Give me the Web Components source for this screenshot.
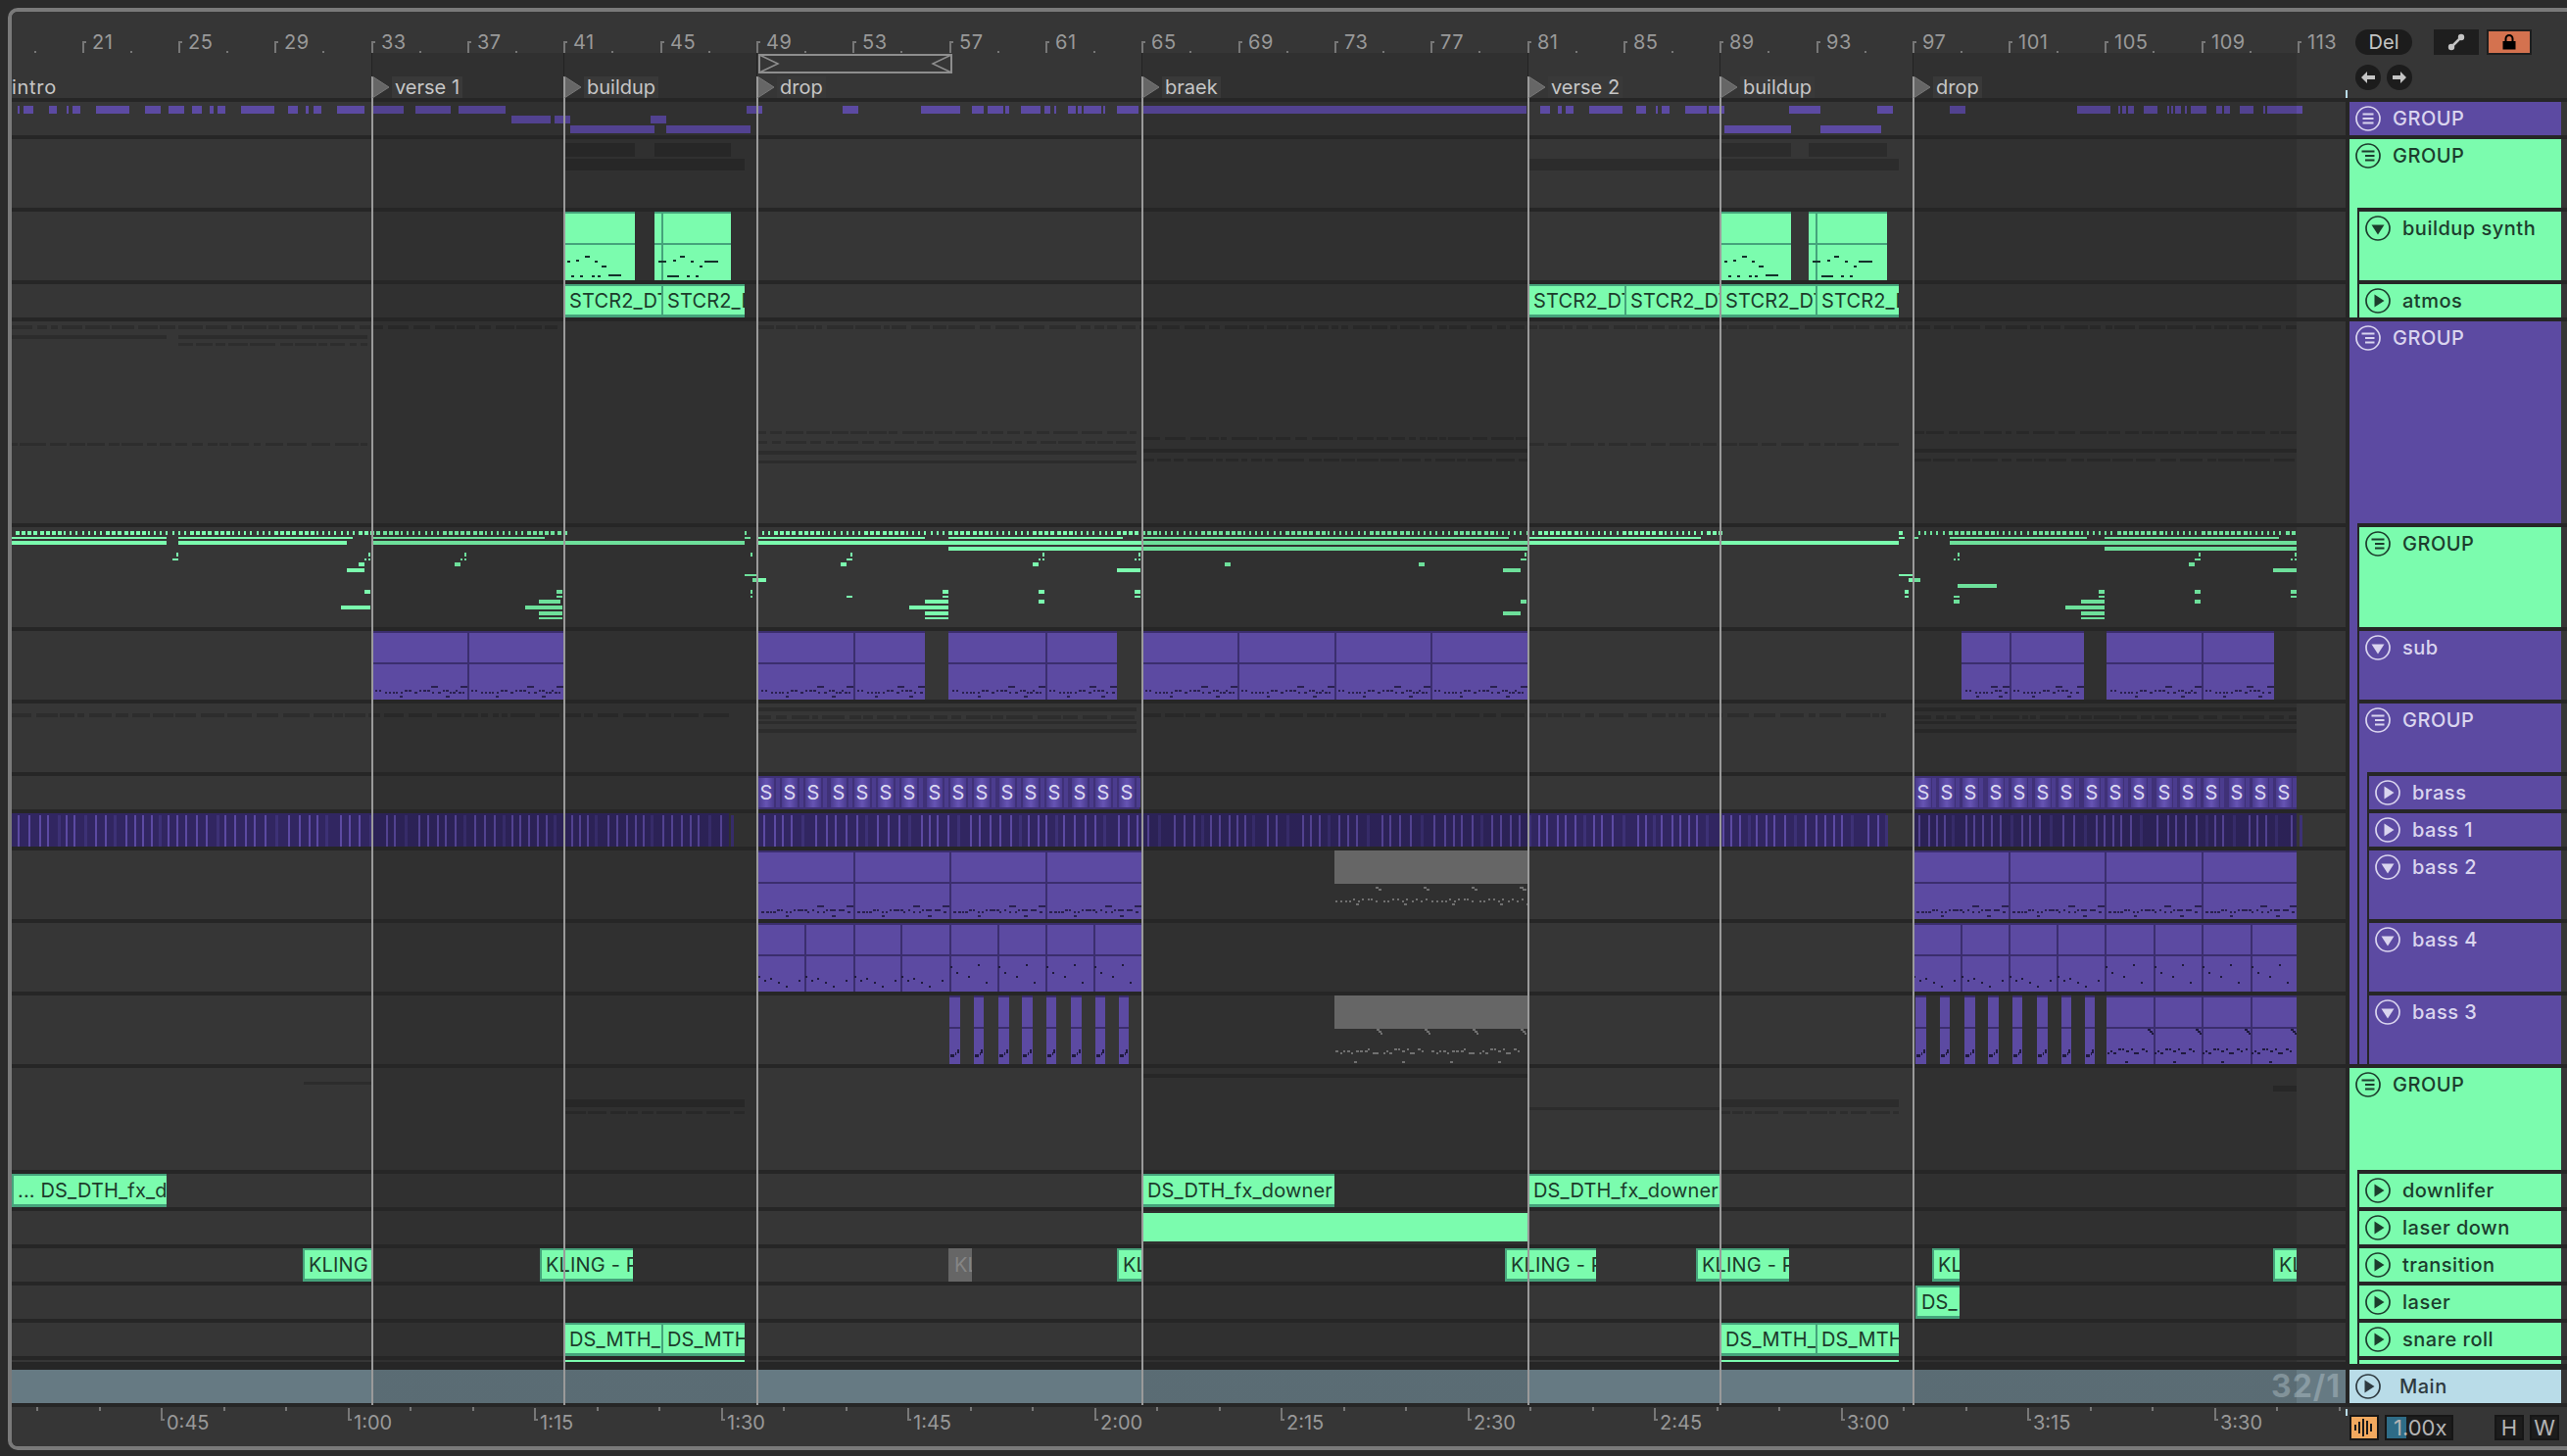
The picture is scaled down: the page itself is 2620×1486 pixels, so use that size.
<!DOCTYPE html>
<html>
<head>
<meta charset="utf-8">
<title>Arrangement</title>
<style>
html, body { margin: 0; padding: 0; background: #2b2b2b; }
body { padding: 8px 0 0 8px; width: 2612px; height: 1478px; overflow: hidden; font-family: Inter, "Liberation Sans", sans-serif; }
</style>
</head>
<body>
<set-window id="win"></set-window>
<script>
const LANE_X		= 12;
const LANE_W		= 2382;
const barX		= bar => Math.round( 378.7 + (bar - 33) * 24.58 );
const GREEN		= "#7bfcae";
const PURPLE		= "#5c4aa2";
const SHADES		= [ [379,773], [1165,1559], [1952,2344] ];

function shadeGradient () {
    const stops		= [];
    for ( let [a, b] of SHADES ) {
	const p		= a - LANE_X, q = b - LANE_X;
	stops.push(`transparent ${p}px`, `rgba(0,0,0,.115) ${p}px`, `rgba(0,0,0,.115) ${q}px`, `transparent ${q}px`);
    }
    return `linear-gradient(90deg, ${stops.join(",")})`;
}

function rng ( seed ) {
    let s		= seed >>> 0;
    return () => {
	s		= (s + 0x6D2B79F5) >>> 0;
	let t		= Math.imul( s ^ (s >>> 15), 1 | s );
	t		= (t + Math.imul( t ^ (t >>> 7), 61 | t )) ^ t;
	return ((t ^ (t >>> 14)) >>> 0) / 4294967296;
    };
}


// Elements

class SetNotes extends HTMLElement {
    constructor () {
	super();
	this.attachShadow({ mode: "open" });
    }
    set rects ( list ) {
	const w		= this.getAttribute("w") || LANE_W;
	const h		= this.getAttribute("h") || 206;
	const body	= list.map( ([a, b, y, ht, fill]) => {
	    const x	= Math.round( a ), wd = Math.max( 1, Math.round( b ) - x );
	    return `<rect x="${x}" y="${y}" width="${wd}" height="${ht}" fill="${fill || "currentColor"}"/>`;
	}).join("");
	this.shadowRoot.innerHTML = `<style>:host { display: block; position: absolute; left: 0; top: 0; line-height: 0; z-index: 1; } svg { display: block; }</style>
	    <svg width="${w}" height="${h}" shape-rendering="crispEdges">${body}</svg>`;
    }
}
customElements.define("set-notes", SetNotes );

const clipTemplate	= document.createElement("template");
clipTemplate.innerHTML	= `
<style>
:host {
  display: block;
  position: absolute;
  box-sizing: border-box;
  overflow: hidden;
  z-index: 3;
  background: var(--bg);
  color: #1c3b2b;
  font: 400 20px/30px Inter, "Liberation Sans", sans-serif;
  letter-spacing: .15px;
  white-space: nowrap;
}
:host([border]) {
  border: 2px solid var(--edge);
  border-right: 0;
  border-bottom-width: 3px;
  padding-left: 4px;
}
.rule {
  position: absolute;
  left: 0;
  right: 0;
  top: 32px;
  height: 2px;
  background: var(--edge);
}
.top {
  position: absolute;
  left: 0;
  right: 0;
  top: 0;
  height: 2px;
  background: var(--edge);
}
.div {
  position: absolute;
  top: 0;
  bottom: 0;
  width: 2px;
  background: var(--edge);
}
</style>
<slot></slot>
`;

class SetClip extends HTMLElement {
    constructor () {
	super();
	this.attachShadow({ mode: "open" });
	this.shadowRoot.appendChild( clipTemplate.content.cloneNode(true) );
    }

    connectedCallback () {
	const num	= n => parseFloat( this.getAttribute(n) || 0 );
	const color	= this.getAttribute("color") || "green";
	const palette	= {
	    "green":	[ GREEN, "#45a37b" ],
	    "purple":	[ PURPLE, "#3b2e6e" ],
	    "gray":	[ "transparent", "transparent" ],
	    "band":	[ "#3f3177", "#3f3177" ],
	    "slice":	[ "linear-gradient(90deg,#4a3b8e,#6654b4 50%,#4a3b8e)", "#4a3b8e" ],
	    "sliver":	[ "#4b3c8e", "#4b3c8e" ],
	    "block":	[ "#666", "#666" ],
	}[ color ];

	this.style.left		= `${Math.round( num("x") ) - LANE_X}px`;
	this.style.width	= `${Math.round( num("w") )}px`;
	this.style.top		= `${num("y")}px`;
	this.style.height	= `${num("h") || 34}px`;
	this.style.setProperty("--bg", palette[0] );
	this.style.setProperty("--edge", palette[1] );

	if ( color === "slice" ) {
	    this.style.color		= "#dcd8f0";
	    this.style.textAlign	= "center";
	}
	if ( color === "slice" || color === "sliver" )
	    this.style.zIndex		= 4;
	if ( color === "block" ) {
	    this.style.color		= "#858585";
	    this.style.paddingLeft	= "6px";
	    this.style.lineHeight	= "34px";
	}

	if ( this.hasAttribute("big") ) {
	    for ( let cls of ["top", "rule"] ) {
		const $el	= document.createElement("div");
		$el.className	= cls;
		this.shadowRoot.appendChild( $el );
	    }
	}
	for ( let d of (this.getAttribute("divs") || "").split(",").filter(Boolean) ) {
	    const $el		= document.createElement("div");
	    $el.className	= "div";
	    $el.style.left	= `${Math.round( parseFloat(d) - num("x") )}px`;
	    this.shadowRoot.appendChild( $el );
	}
    }
}
customElements.define("set-clip", SetClip );

const ICONS		= {
    "fold":	`<path d="M7.500 8.500h11M7.500 13h11M7.500 17.500h11" fill="none" stroke="currentColor" stroke-width="2"/>`,
    "open":	`<path d="M6.500 8.500h13M10 13h9.500M10 17.500h9.500" fill="none" stroke="currentColor" stroke-width="2"/>`,
    "play":	`<path d="M9.500 6.500v13l10-6.500z" fill="currentColor"/>`,
    "down":	`<path d="M6.500 9.500h13l-6.500 10z" fill="currentColor"/>`,
};

class SetIcon extends HTMLElement {
    constructor () {
	super();
	this.attachShadow({ mode: "open" });
	this.shadowRoot.innerHTML = `<style>:host { display: block; width: 26px; height: 26px; flex: none; } svg { display: block; }</style>
	    <svg width="26" height="26" viewBox="0 0 26 26"><circle cx="13" cy="13" r="12" fill="none" stroke="currentColor" stroke-width="1.700"/>${ICONS[ this.getAttribute("name") ] || ""}</svg>`;
    }
}
customElements.define("set-icon", SetIcon );

const trackTemplate	= document.createElement("template");
trackTemplate.innerHTML	= `
<style>
:host {
  display: grid;
  grid-template-columns: ${LANE_W}px 4px 216px 6px;
  background: #262626;
}
.lane {
  position: relative;
  overflow: hidden;
  background: var(--lane, #363636);
  height: var(--h);
  margin-bottom: var(--sep);
}
.shade {
  position: absolute;
  inset: 0;
  z-index: 2;
  background: ${shadeGradient()};
}
.badge {
  position: absolute;
  right: 5px;
  top: 0;
  z-index: 3;
  font: 700 32px/34px Inter, "Liberation Sans", sans-serif;
  letter-spacing: 1px;
  color: rgba(205,220,226,.34);
}
.head {
  display: flex;
}
.strip {
  width: 8px;
  margin-right: 2px;
  flex: none;
}
.strip.closed {
  margin-bottom: var(--sep);
}
.own {
  flex: 1;
  display: flex;
  flex-direction: column;
  min-width: 0;
  background: var(--fill);
  color: var(--ink);
}
.label {
  flex: 1;
  display: flex;
  align-items: flex-start;
  gap: 12px;
  padding: 4px 0 0 6px;
  overflow: hidden;
  font: 500 20px/26px Inter, "Liberation Sans", sans-serif;
  letter-spacing: .5px;
}
.bar {
  height: var(--sep);
  flex: none;
  background: #262626;
}
:host([lead]) .bar {
  margin-left: 8px;
}
.edge {
  background: #363636;
  margin-bottom: var(--sep);
}
</style>
<div class="lane">
    <slot></slot>
    <div class="shade"></div>
</div>
<div></div>
<div class="head"></div>
<div class="edge"></div>
`;

class SetTrack extends HTMLElement {
    constructor () {
	super();
	this.attachShadow({ mode: "open" });
	this.shadowRoot.appendChild( trackTemplate.content.cloneNode(true) );
	this.$head	= this.shadowRoot.querySelector(".head");
	this.$lane	= this.shadowRoot.querySelector(".lane");
    }

    connectedCallback () {
	const attr	= n => this.getAttribute(n);
	const colors	= {
	    "purple":	[ PURPLE, "#dad5ef" ],
	    "green":	[ GREEN, "#1c3d2d" ],
	    "blue":	[ "#b9dce8", "#2f3a40" ],
	};
	const fill	= colors[ attr("color") ];

	this.style.setProperty("--h", `${attr("h")}px` );
	this.style.setProperty("--sep", `${attr("sep") || 4}px` );
	this.style.setProperty("--fill", fill[0] );
	this.style.setProperty("--ink", fill[1] );
	if ( attr("lane") )
	    this.style.setProperty("--lane", attr("lane") );

	let html	= "";
	const closed	= this.hasAttribute("closed") ? " closed" : "";
	for ( let c of (attr("strips") || "").split(",").filter(Boolean) )
	    html	+= `<div class="strip${closed}" style="background:${colors[c][0]}"></div>`;

	const name	= attr("name");
	const pad	= attr("color") === "blue" ? ' style="margin-left:7px"' : "";
	html		+= `<div class="own"><div class="label">`
	    + (attr("icon") ? `<set-icon name="${attr("icon")}"></set-icon>` : "")
	    + (name ? `<span${pad}>${name}</span>` : "")
	    + `</div><div class="bar"></div></div>`;
	this.$head.innerHTML	= html;

	if ( attr("badge") ) {
	    const $b		= document.createElement("div");
	    $b.className	= "badge";
	    $b.textContent	= attr("badge");
	    this.$lane.appendChild( $b );
	}
    }
}
customElements.define("set-track", SetTrack );

const headTemplate	= document.createElement("template");
headTemplate.innerHTML	= `
<style>
:host {
  display: grid;
  grid-template-columns: ${LANE_W}px 1fr;
  height: 92px;
  background: #363636;
  color: #999;
  font: 400 20px/26px Inter, "Liberation Sans", sans-serif;
}
.left {
  position: relative;
  height: 88px;
}
.strip {
  position: absolute;
  left: 0;
  right: 0;
  top: 42px;
  height: 46px;
  background: ${shadeGradient()};
}
.num {
  position: absolute;
  top: 18px;
  white-space: nowrap;
  letter-spacing: .5px;
}
.tick {
  position: absolute;
  top: 30px;
  width: 4px;
  height: 12px;
  box-sizing: border-box;
  border-left: 2px solid #777;
  border-top: 2px solid #777;
}
.dot {
  position: absolute;
  top: 40px;
  width: 2px;
  height: 2px;
  background: #777;
}
.sep {
  grid-column: 1 / 3;
  height: 4px;
  background: #262626;
}
.tools {
  position: relative;
  height: 88px;
  padding: 18px 0 0 10px;
  box-sizing: border-box;
  color: #c4c4c4;
}
.row {
  display: flex;
  align-items: center;
}
.del {
  box-sizing: border-box;
  width: 58px;
  height: 26px;
  border-radius: 13px;
  background: #1c1c1c;
  text-align: center;
  font-size: 20px;
  line-height: 26px;
}
.btn {
  box-sizing: border-box;
  width: 46px;
  height: 26px;
  background: #1e1e1e;
  display: flex;
  align-items: center;
  justify-content: center;
}
.lock {
  background: #d4724f;
  border: 2px solid #1e1e1e;
}
.nav {
  width: 26px;
  height: 26px;
  border-radius: 50%;
  background: #1c1c1c;
  display: flex;
  align-items: center;
  justify-content: center;
}
.blue {
  position: absolute;
  left: 0;
  top: 80px;
  width: 2px;
  height: 8px;
  background: #b9dce8;
}
</style>
<div class="left"><div class="strip"></div></div>
<div class="tools">
    <div class="blue"></div>
    <div class="row">
	<div class="del">Del</div>
	<div class="btn" style="margin-left:22px"><svg width="20" height="20" viewBox="0 0 20 20"><path d="M5 15 15 5" stroke="#c4c4c4" stroke-width="2.500"/><circle cx="5" cy="15" r="3.200" fill="#c4c4c4"/><circle cx="15" cy="5" r="3.200" fill="#c4c4c4"/></svg></div>
	<div class="btn lock" style="margin-left:8px"><svg width="16" height="16" viewBox="0 0 16 16"><path d="M1.500 7h13v8.500h-13z" fill="#000"/><path d="M4.500 7V4.500a3.500 3.500 0 0 1 7 0V7" fill="none" stroke="#000" stroke-width="2"/></svg></div>
    </div>
    <div class="row" style="margin-top:10px;gap:6px">
	<div class="nav"><svg width="16" height="14" viewBox="0 0 16 14"><path d="M7 1 1 7l6 6V9h8V5H7z" fill="#c4c4c4"/></svg></div>
	<div class="nav"><svg width="16" height="14" viewBox="0 0 16 14"><path d="M9 1l6 6-6 6V9H1V5h8z" fill="#c4c4c4"/></svg></div>
    </div>
</div>
<div class="sep"></div>
`;

class SetHead extends HTMLElement {
    constructor () {
	super();
	this.attachShadow({ mode: "open" });
	this.shadowRoot.appendChild( headTemplate.content.cloneNode(true) );
	const $left	= this.shadowRoot.querySelector(".left");
	let html	= "";
	for ( let bar = 21; bar <= 113; bar += 4 ) {
	    const x	= barX( bar ) - LANE_X;
	    html	+= `<div class="tick" style="left:${x}px"></div><div class="num" style="left:${x+10}px">${bar}</div>`;
	    if ( bar < 113 )
		html	+= `<div class="dot" style="left:${x+49}px"></div>`;
	}
	html		+= `<div class="dot" style="left:23px"></div>`;
	$left.insertAdjacentHTML("beforeend", html );
    }
}
customElements.define("set-head", SetHead );

const footTemplate	= document.createElement("template");
footTemplate.innerHTML	= `
<style>
:host {
  display: grid;
  grid-template-columns: ${LANE_W}px 4px 1fr;
  height: 42px;
  background: #363636;
  color: #999;
  font: 400 20px/26px Inter, "Liberation Sans", sans-serif;
}
.left {
  position: relative;
  overflow: hidden;
}
.major {
  position: absolute;
  top: 1px;
  width: 4px;
  height: 13px;
  box-sizing: border-box;
  border-left: 2px solid #777;
  border-bottom: 2px solid #777;
}
.minor {
  position: absolute;
  top: 0;
  width: 2px;
  height: 4px;
  background: #777;
}
.time {
  position: absolute;
  top: 3px;
}
.blue {
  position: absolute;
  left: 0;
  top: 2px;
  width: 2px;
  height: 7px;
  background: #b9dce8;
}
.mid { position: relative; }
.tools {
  display: flex;
  align-items: flex-start;
  gap: 6px;
  padding-top: 8px;
}
.key {
  box-sizing: border-box;
  width: 30px;
  height: 26px;
  background: #1c1c1c;
  border: 2px solid #161616;
  color: #b4b4b4;
  text-align: center;
  font-size: 22px;
  line-height: 22px;
}
.meter {
  background: #f2a95f;
  display: flex;
  align-items: center;
  justify-content: center;
}
.speed {
  position: relative;
  box-sizing: border-box;
  width: 70px;
  height: 26px;
  background: #1c1c1c;
  border: 2px solid #161616;
  color: #b4b4b4;
  font-size: 22px;
  line-height: 22px;
  text-indent: 7px;
}
.speed i {
  position: absolute;
  left: 0;
  top: 0;
  bottom: 0;
  width: 20px;
  background: #2e6c87;
}
.speed span { position: relative; }
</style>
<div class="left"></div>
<div class="mid"><div class="blue"></div></div>
<div class="tools">
    <div class="key meter"><svg width="22" height="20" viewBox="0 0 22 20" shape-rendering="crispEdges"><path d="M1 7h1.500v6H1zM5 4h1.500v12H5zM9 1h1.500v18H9zM13 3h1.500v14H13zM17 6h1.500v8H17z" fill="#1a1a1a"/></svg></div>
    <div class="speed"><i></i><span>1.00x</span></div>
    <div class="key" style="margin-left:36px">H</div>
    <div class="key">W</div>
</div>
`;

class SetFoot extends HTMLElement {
    constructor () {
	super();
	this.attachShadow({ mode: "open" });
	this.shadowRoot.appendChild( footTemplate.content.cloneNode(true) );
	const $left	= this.shadowRoot.querySelector(".left");
	let html	= "";
	for ( let i = -2; i < 38; i++ ) {
	    const x	= Math.round( 164 + i * 63.5 ) - LANE_X;
	    if ( (i + 3) % 3 !== 0 || i < 0 )
		html	+= `<div class="minor" style="left:${x}px"></div>`;
	}
	for ( let i = 0; i < 12; i++ ) {
	    const x	= Math.round( 164 + i * 190.5 ) - LANE_X;
	    const secs	= 45 + i * 15;
	    const text	= `${Math.floor( secs / 60 )}:${String( secs % 60 ).padStart( 2, "0" )}`;
	    html	+= `<div class="major" style="left:${x}px"></div><div class="time" style="left:${x+6}px">${text}</div>`;
	}
	$left.innerHTML	= html;
    }
}
customElements.define("set-foot", SetFoot );

const locatorTemplate	= document.createElement("template");
locatorTemplate.innerHTML = `
<style>
:host {
  position: absolute;
  top: 42px;
  width: 0;
  height: 1380px;
  z-index: 6;
  color: #c6c6c6;
  font: 400 20px/22px Inter, "Liberation Sans", sans-serif;
}
.dark {
  position: absolute;
  left: 0;
  top: 0;
  width: 1px;
  height: 24px;
  background: #232323;
}
.line {
  position: absolute;
  left: 0;
  top: 24px;
  bottom: 0;
  width: 2px;
  background: #9a9a9a;
}
svg {
  position: absolute;
  left: 0;
  top: 24px;
}
span {
  position: absolute;
  left: 21px;
  top: 24px;
  padding: 0 3px;
  white-space: nowrap;
  background: #393939;
}
</style>
`;

class SetLocator extends HTMLElement {
    constructor () {
	super();
	this.attachShadow({ mode: "open" });
	this.shadowRoot.appendChild( locatorTemplate.content.cloneNode(true) );
    }
    connectedCallback () {
	const root	= this.shadowRoot;
	const bar	= this.getAttribute("bar");
	this.style.left	= `${ bar ? barX( parseInt(bar) ) - LANE_X : 0 }px`;
	if ( bar )
	    root.innerHTML += `<div class="dark"></div><div class="line"></div>
		<svg width="20" height="22" viewBox="0 0 20 22"><path d="M1 0v22L18 11z" fill="#666" /><path d="M1 0v22" stroke="#9a9a9a" stroke-width="2"/><path d="M1 0 18 11 1 22" fill="none" stroke="#777" stroke-width="1"/></svg>`;
	root.innerHTML	+= `<span style="${bar ? "" : "left:0;padding:0;background:none;letter-spacing:.7px"}">${this.getAttribute("name")}</span>`;
    }
}
customElements.define("set-locator", SetLocator );

class SetBrace extends HTMLElement {
    constructor () {
	super();
	this.attachShadow({ mode: "open" });
	this.shadowRoot.innerHTML = `<style>:host { position: absolute; left: ${774 - LANE_X}px; top: 43px; z-index: 6; line-height: 0; }</style>
	    <svg width="198" height="20" viewBox="0 0 198 20" fill="none" stroke="#8e8e8e" stroke-width="2"><rect x="1" y="1" width="196" height="18"/><path d="M1 1 20 10 1 19M197 1 178 10 197 19" stroke-width="1.500"/></svg>`;
    }
}
customElements.define("set-brace", SetBrace );

const windowTemplate	= document.createElement("template");
windowTemplate.innerHTML = `
<style>
:host {
  display: block;
  position: relative;
  box-sizing: border-box;
  width: 2612px;
  height: 1472px;
  border: 4px solid #7a7a7a;
  border-right: 0;
  border-radius: 10px 0 0 10px;
  background: #363636;
  overflow: hidden;
}
</style>
<slot></slot>
`;

class SetWindow extends HTMLElement {
    constructor () {
	super();
	this.attachShadow({ mode: "open" });
	this.shadowRoot.appendChild( windowTemplate.content.cloneNode(true) );
    }
}
customElements.define("set-window", SetWindow );


// Content helpers

function el ( tag, attrs = {}, children = [] ) {
    const $el		= document.createElement( tag );
    for ( let [k, v] of Object.entries( attrs ) ) {
	if ( v !== false && v !== undefined )
	    $el.setAttribute( k, v === true ? "" : v );
    }
    for ( let c of [].concat( children ) )
	$el.append( c );
    return $el;
}

function notes ( rects, attrs = {} ) {
    const $n		= el("set-notes", attrs );
    $n.rects		= rects;
    return $n;
}

function clip ( x, x2, opts = {}, children = [] ) {
    return el("set-clip", { x, w: x2 - x, y: opts.y || 0, h: opts.h, color: opts.color, big: opts.big, border: opts.border, divs: opts.divs }, children );
}

const INK		= "#2a2150";

function bassNotes ( w, seed ) {
    const r		= rng( seed ), out = [];
    for ( let x = 4; x < w - 4; x += 3 + Math.floor( r() * 4 ) ) {
	const y		= 60 + Math.floor( r() * 2 ) * 2;
	out.push([ x, x + 2 + Math.floor( r() * 2 ), y, 2, INK ]);
    }
    out.push([ w * .62, w * .62 + 7, 56, 2, INK ], [ w - 7, w, 56, 2, INK ], [ w * .3, w * .3 + 3, 66, 2, INK ], [ w * .78, w * .78 + 4, 66, 2, INK ]);
    return out;
}

function sparseNotes ( w, seed, y0, y1, color = "#1f1a3d" ) {
    const r		= rng( seed ), out = [];
    for ( let x = 1; x < w - 2; x += 6 + Math.floor( r() * 8 ) ) {
	const y		= y0 + 2 * Math.floor( r() * (y1 - y0) / 2 );
	out.push([ x, x + 2, y, 2, color ]);
    }
    return out;
}

function lowNotes ( w, seed, color = "#1f1a3d" ) {
    const r		= rng( seed ), out = [];
    if ( w < 20 )
	return [ [1,3,60,3,color], [3,5,60,3,color], [6,7,58,3,color], [w-3,w-1,55,4,color] ];
    for ( let x = 1; x < w - 4; x += 3 + Math.floor( r() * 3 ) ) {
	const y		= 54 + 2 * Math.floor( r() * 3 );
	out.push([ x, x + 2 + Math.floor( r() * 2 ), y, 2, color ]);
    }
    out.push([ w - 6, w - 3, 34, 2, color ], [ w - 4, w - 1, 36, 2, color ], [ w - 2, w, 38, 2, color ], [ w * .4, w * .4 + 3, 67, 2, color ]);
    return out;
}

function riff ( x, x2, divs, fn, opts = {} ) {
    const edges		= [ x, ...divs, x2 ];
    const rects		= [];
    for ( let i = 0; i < edges.length - 1; i++ ) {
	const w		= edges[i+1] - edges[i];
	for ( let n of fn( w, i ) )
	    rects.push([ n[0] + edges[i] - x, n[1] + edges[i] - x, n[2], n[3], n[4] ]);
    }
    return clip( x, x2, { big: true, h: 70, color: "purple", divs: divs.join(","), ...opts }, notes( rects, { w: x2 - x, h: 70 } ) );
}

function zz ( base, y, h, flat ) {
    const out		= [];
    for ( let i = 0; i < flat.length; i += 2 )
	out.push([ base + flat[i] / 1.96 - LANE_X, base + flat[i+1] / 1.96 - LANE_X, y, h ]);
    return out;
}

function topNotes () {
    return [
	...zz( 0, 4, 8, [35,39,47,67,98,114,133,137,145,161,192,259,290,321,337,368,384,404,419,427,435,451,482,549,576,596,612,618,627,643,674,729,745,808,831,902,917,1011,1494,1525] ),
	...zz( 0, 14, 8, [1023,1102,1109,1141,1301,1333] ),
	...zz( 0, 24, 8, [1141,1309,1333,1501] ),
	...zz( 760, 4, 8, [4,35,196,227,353,431,455,478,486,517,521,529,553,592,600,612,619,623,647,662,666,674,678,713,717,721,745,788,795,1564] ),
	...zz( 1560, 4, 8, [24,43,59,67,74,90,122,188,216,235,255,259,267,282,314,357,361,392,521,584,698,729,843,874,1098,1164,1180,1184,1188,1196,1200,1211,1231,1258,1278,1282,1286,1290,1294,1305,1313,1317,1325,1356,1376,1388,1392,1403,1423,1450,1470,1474,1478,1548] ),
	...zz( 1560, 24, 8, [392,525,584,706] ),
    ];
}

function leadNotes () {
    const T		= 538;
    const out		= [];
    const dots = ( a, b, phase ) => {
	for ( let x = a; x < b; x += 6.14 ) {
	    const wide	= ((x - phase) % 86 + 86) % 86 < 46;
	    out.push([ x - LANE_X, x - LANE_X + (wide ? 4 : 2), 542 - T, 4 ]);
	}
    };
    dots( 16, 578, 16 );
    dots( 790 - 6.14 * 2, 1758, 16 );
    dots( 1958, 2342, 1988 );
    out.push([ 760 - LANE_X, 762 - LANE_X, 4, 4 ], [ 1938 - LANE_X, 1942 - LANE_X, 4, 4 ]);

    const bands		= [
	[ 548, 2, [[12,170],[182,360],[380,556],[760,766],[774,944],[968,1146],[1166,1540],[1560,1736],[1938,1944],[1953,1958],[1990,2130],[2148,2326]] ],
	[ 552, 4, [[12,170],[182,354],[380,760],[774,1938],[1990,2344]] ],
	[ 558, 4, [[968,1560],[2148,2344]] ],
    ];
    for ( let [y, h, list] of bands )
	for ( let [a, b] of list )
	    out.push([ a - LANE_X, b - LANE_X, y - T, h ]);

    const left		= {
	564: [353,357,737,741,929,933,1501,1505],
	570: [345,357,729,733,737,741,921,925,929,933],
	574: [717,729,909,921],
	580: [694,729],
	586: [1490,1513],
	590: [1505,1533],
	602: [729,741,1113,1125,1501,1505],
	608: [1113,1125,1501,1505],
	612: [1078,1121],
	618: [682,741,1051,1125],
	624: [1078,1125],
	630: [1078,1125],
    };
    const mid		= {
	564: [212,216,596,600,788,792,1560,1564],
	570: [204,216,588,592,596,600,780,784,788,792,1552,1564],
	574: [192,204,576,588,960,972,1348,1360],
	580: [745,792,1517,1552],
	602: [396,408,588,600,780,792],
	608: [204,216,396,408,780,792],
	612: [361,408,588,600,1552,1564],
	618: [329,408],
	624: [361,408,1517,1552],
	630: [361,408],
    };
    const right		= {
	564: [858,862,1341,1345,1533,1537],
	570: [851,855,858,862,1333,1345,1525,1529,1533,1537],
	574: [1321,1333],
	580: [1490,1537],
	586: [741,768],
	590: [760,784],
	596: [858,937],
	602: [753,760,1141,1152,1333,1345,1525,1537],
	608: [753,760,851,862,1141,1152,1525,1537],
	612: [851,862,1105,1152,1333,1345],
	618: [1074,1152],
	624: [1105,1152],
	630: [1105,1152],
    };
    const thin		= y => [ 570, 586, 608, 630 ].includes( y ) ? 2 : 4;
    for ( let [base, table] of [ [0, left], [760, mid], [1560, right] ] )
	for ( let y of Object.keys( table ) )
	    out.push( ...zz( base, y - T, thin( +y ), table[y] ) );
    return out;
}

function dashes ( a, b, y, h, seed ) {
    const r		= rng( seed ), out = [];
    for ( let x = a; x < b; ) {
	const w		= 6 + Math.floor( r() * 22 );
	out.push([ x - LANE_X, Math.min( x + w, b ) - LANE_X, y, h, "#2d2d2d" ]);
	x		+= w + 2 + Math.floor( r() * 4 );
    }
    return out;
}
const bandRect = ( a, b, y, h ) => [ a - LANE_X, b - LANE_X, y, h, "#2c2c2c" ];

// bright hits come in small bursts with darker gaps between them
function stripes () {
    const out		= [];
    const r		= rng( 73 );
    for ( let [a, b] of [ [12,744], [773,1925], [1952,2344] ] ) {
	out.push([ a - LANE_X, b - LANE_X, 0, 34, "#312661" ]);
	for ( let x = a + 6; x < b - 2; ) {
	    const burst	= 2 + Math.floor( r() * 4 );
	    for ( let i = 0; i < burst && x < b - 2; i++ ) {
		out.push([ x - LANE_X, x - LANE_X + 2, 2, 32, "#5c4aa2" ]);
		x	+= 8 + Math.floor( r() * 4 );
	    }
	    out.push([ x - LANE_X, x - LANE_X + 3, 2, 32, "#3d3176" ]);
	    x		+= 8 + Math.floor( r() * 10 );
	}
    }
    return out;
}

function sClips ( shift ) {
    const centres	= [ 783.7, 807.7, 831.7, 857.7, 881.7, 905.7, 929.7, 955.7, 979.7, 1003.7, 1029.7, 1053.7, 1077.7, 1103.7, 1127.7, 1151.7 ];
    const out		= [ clip( 773 + shift, shift ? 2344 : 1163, { color: "band", h: 34 } ) ];
    for ( let c of centres ) {
	const cx	= c + shift;
	out.push( el("set-clip", { x: cx - 9.5, w: 16, y: 2, h: 30, color: "slice" }, "S" ) );
	out.push( el("set-clip", { x: cx + 8, w: 4, y: 2, h: 30, color: "sliver" } ) );
    }
    return out;
}

const txt = ( x, x2, label, opts = {} ) => clip( x, x2, { border: true, h: 34, ...opts }, label );

const SYNTH_A		= [ [4,7,50], [13,16,49], [22,27,45], [32,35,50], [39,44,55], [8,11,65], [17,20,65], [29,32,65], [35,38,65], [46,59,64] ];
const SYNTH_B		= [ [4,12,50], [19,22,49], [26,31,45], [37,40,50], [46,49,55], [51,65,50], [13,25,65], [33,36,65], [42,45,65] ];

function greenSynth ( x, x2, shape, divs ) {
    const rects		= shape.map( ([a, b, y]) => [ a, b, y, 2, "#14302a" ] );
    return clip( x, x2, { big: true, h: 70, color: "green", divs }, notes( rects, { w: x2 - x, h: 70 } ) );
}

function grayClip ( x, x2, low ) {
    const w		= x2 - x;
    const rects		= [];
    const GRAY		= "#707070";
    for ( let s = 0; s < w; s += 49 ) {
	const seg	= Math.min( 49, w - s );
	if ( low ) {
	    for ( let n of lowNotes( 49, 61 + s % 2, GRAY ) )
		rects.push([ n[0] + s, n[1] + s, n[2], n[3], n[4] ]);
	} else {
	    const r	= rng( 41 + (s / 49) % 2 );
	    for ( let a = 1; a < seg - 4; a += 3 + Math.floor( r() * 4 ) )
		rects.push([ a + s, a + s + 2, 49 + 2 * Math.floor( r() * 2 ), 2, GRAY ]);
	    rects.push([ s + seg - 7, s + seg - 4, 37, 2, GRAY ], [ s + seg - 4, s + seg - 1, 39, 2, GRAY ], [ s + seg * .45, s + seg * .45 + 3, 54, 2, GRAY ]);
	}
    }
    rects.push([ 0, w, 0, 34, "#666" ]);
    return clip( x, x2, { h: 70, color: "gray" }, notes( rects, { w, h: 70 } ) );
}


// Build

const bassRiff		= w => bassNotes( w, 41 );
const subRiff		= w => bassNotes( w, 21 );
const sparseRiff	= (w, i) => i < 4 ? sparseNotes( w, 51, 54, 67 ) : sparseNotes( w, 52, 40, 67 );

const TRACKS		= [
    { h: 34, name: "GROUP", icon: "fold", color: "purple", kids: () => [ notes( topNotes().map( r => [...r, PURPLE] ), { h: 34 } ) ] },
    { h: 70, name: "GROUP", icon: "open", color: "green", lead: true, kids: () => [
	notes([ bandRect(575,648,4,14), bandRect(668,746,4,14), bandRect(575,760,20,12), bandRect(1756,1828,4,14), bandRect(1846,1926,4,14), bandRect(1560,1938,20,12) ], { h: 70 } ),
    ]},
    { h: 70, name: "buildup synth", icon: "down", color: "green", strips: "green", kids: () => [
	greenSynth( 575, 648, SYNTH_A ), greenSynth( 668, 746, SYNTH_B, "675" ),
	greenSynth( 1756, 1828, SYNTH_A ), greenSynth( 1846, 1926, SYNTH_B, "1853" ),
    ]},
    { h: 34, name: "atmos", icon: "play", color: "green", strips: "green", closed: true, kids: () => [
	txt( 575, 675, "STCR2_DT" ), txt( 675, 760, "STCR2_D" ),
	txt( 1559, 1658, "STCR2_DT" ), txt( 1658, 1755, "STCR2_DT" ), txt( 1755, 1853, "STCR2_DT" ), txt( 1853, 1938, "STCR2_D" ),
    ]},
    { h: 206, name: "GROUP", icon: "open", color: "purple", lead: true, kids: () => [
	notes([
	    ...dashes( 12, 571, 4, 4, 5 ), ...dashes( 773, 2344, 4, 4, 6 ),
	    bandRect(12,170,14,4), bandRect(182,375,14,4), ...dashes( 182, 375, 22, 3, 14 ),
	    ...dashes( 12, 375, 124, 3, 7 ),
	    ...dashes( 773, 1160, 112, 3, 8 ), ...dashes( 773, 1160, 122, 3, 9 ), bandRect(773,1160,132,4), bandRect(773,1160,142,3),
	    ...dashes( 1167, 1559, 118, 3, 10 ), bandRect(1167,1559,130,4), ...dashes( 1167, 1559, 140, 3, 15 ),
	    ...dashes( 1559, 1938, 124, 3, 11 ),
	    ...dashes( 1952, 2344, 112, 3, 12 ), bandRect(1952,2344,130,4), ...dashes( 1952, 2344, 140, 3, 16 ),
	], { h: 206 } ),
    ]},
    { h: 102, name: "GROUP", icon: "open", color: "green", strips: "purple", kids: () => [ notes( leadNotes().map( r => [ r[0], r[1], r[2], r[3], GREEN ] ), { h: 102 } ) ] },
    { h: 70, name: "sub", icon: "down", color: "purple", strips: "purple", kids: () => [
	riff( 379, 575, [477], subRiff ),
	riff( 773, 944, [871], subRiff ),
	riff( 968, 1140, [1067], subRiff ),
	riff( 1165, 1559, [1263,1362,1460], subRiff ),
	riff( 2002, 2127, [2051], subRiff ),
	riff( 2150, 2321, [2247], subRiff ),
    ]},
    { h: 70, name: "GROUP", icon: "open", color: "purple", strips: "purple", lead: true, kids: () => [
	notes([
	    ...dashes( 12, 744, 10, 4, 31 ),
	    bandRect(773,1160,4,4), ...dashes( 773, 1160, 12, 4, 32 ), bandRect(773,1160,18,3), bandRect(773,1160,26,4),
	    ...dashes( 1167, 1925, 10, 4, 33 ),
	    bandRect(1952,2344,4,4), ...dashes( 1952, 2344, 12, 4, 34 ), bandRect(1952,2344,18,3), bandRect(1952,2344,26,4),
	], { h: 70 } ),
    ]},
    { h: 34, name: "brass", icon: "play", color: "purple", strips: "purple,purple", kids: () => [ ...sClips( 0 ), ...sClips( 1180.3 ) ] },
    { h: 34, name: "bass 1", icon: "play", color: "purple", strips: "purple,purple", kids: () => [ notes( stripes(), { h: 34 } ) ] },
    { h: 70, name: "bass 2", icon: "down", color: "purple", strips: "purple,purple", kids: () => [
	riff( 773, 1165, [871,969,1067], bassRiff ),
	grayClip( 1362, 1559, false ),
	riff( 1952, 2344, [2050,2148,2247], bassRiff ),
    ]},
    { h: 70, name: "bass 4", icon: "down", color: "purple", strips: "purple,purple", kids: () => [
	riff( 773, 1165, [821,871,919,969,1018,1067,1116], sparseRiff ),
	riff( 1952, 2344, [2001,2050,2099,2148,2198,2247,2297], sparseRiff ),
    ]},
    { h: 70, name: "bass 3", icon: "down", color: "purple", strips: "purple,purple", closed: true, kids: () => [
	...[ [969,980], [994,1004], [1019,1030], [1043,1054], [1068,1078], [1093,1104], [1118,1128], [1142,1152] ].map( ([a, b]) => riff( a, b, [], w => lowNotes( w, 61 ) ) ),
	grayClip( 1362, 1559, true ),
	...[ [1955,1966], [1980,1990], [2005,2016], [2029,2040], [2054,2064], [2079,2090], [2104,2114], [2128,2138] ].map( ([a, b]) => riff( a, b, [], w => lowNotes( w, 61 ) ) ),
	riff( 2150, 2344, [2198,2247,2297], w => lowNotes( w, 62 ) ),
    ]},
    { h: 104, name: "GROUP", icon: "open", color: "green", lead: true, kids: () => [
	notes([
	    bandRect(1165,1559,6,4), bandRect(310,379,14,3), bandRect(2320,2344,18,6),
	    bandRect(576,760,32,8), ...dashes( 576, 760, 44, 3, 71 ),
	    bandRect(1756,1938,32,8), ...dashes( 1756, 1938, 44, 3, 72 ), bandRect(1559,1755,40,3),
	], { h: 104 } ),
    ]},
    { h: 34, name: "downlifer", icon: "play", color: "green", strips: "green", kids: () => [
	txt( 12, 170, "... DS_DTH_fx_downer" ), txt( 1165, 1362, "DS_DTH_fx_downer" ), txt( 1559, 1755, "DS_DTH_fx_downer" ),
    ]},
    { h: 34, name: "laser down", icon: "play", color: "green", strips: "green", kids: () => [
	clip( 1165, 1559, { y: 2, h: 29, color: "green" } ),
    ]},
    { h: 34, name: "transition", icon: "play", color: "green", strips: "green", kids: () => [
	txt( 309, 379, "KLING" ), txt( 551, 646, "KLING - P" ),
	clip( 968, 992, { h: 34, color: "block" }, "KL" ),
	txt( 1140, 1165, "KLING" ), txt( 1536, 1629, "KLING - P" ), txt( 1731, 1826, "KLING - P" ),
	txt( 1972, 2000, "KLING" ), txt( 2320, 2344, "KLING" ),
    ]},
    { h: 34, name: "laser", icon: "play", color: "green", strips: "green", kids: () => [ txt( 1955, 2000, "DS_MTH" ) ] },
    { h: 34, name: "snare roll", icon: "play", color: "green", strips: "green", kids: () => [
	txt( 575, 675, "DS_MTH_" ), txt( 675, 760, "DS_MTH_" ), txt( 1755, 1853, "DS_MTH_" ), txt( 1853, 1938, "DS_MTH_" ),
    ]},
    { h: 2, color: "green", strips: "green", closed: true, sep: 6, kids: () => [
	clip( 575, 760, { h: 2, color: "green" } ), clip( 1755, 1938, { h: 2, color: "green" } ),
    ]},
    { h: 34, name: "Main", icon: "play", color: "blue", lane: "#667a83", badge: "32/1", kids: () => [] },
];

const $win		= document.getElementById("win");
$win.append( el("set-head") );

for ( let t of TRACKS ) {
    const $t		= el("set-track", {
	h: t.h, name: t.name, icon: t.icon, color: t.color, strips: t.strips,
	lead: t.lead, closed: t.closed, sep: t.sep, lane: t.lane, badge: t.badge,
    });
    $t.append( ...t.kids() );
    $win.append( $t );
}
$win.append( el("set-foot") );

for ( let [name, bar] of [ ["intro"], ["verse 1",33], ["buildup",41], ["drop",49], ["braek",65], ["verse 2",81], ["buildup",89], ["drop",97] ] )
    $win.append( el("set-locator", { name, bar }) );
$win.append( el("set-brace") );
</script>
</body>
</html>
